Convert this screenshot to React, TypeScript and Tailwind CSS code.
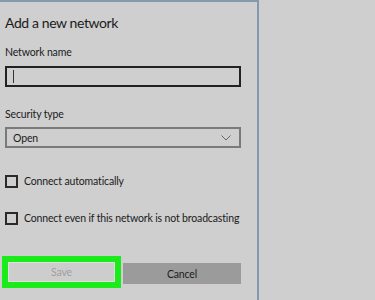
export default function App() {
  return (
    <div className="flex h-[300px] w-[375px] overflow-hidden bg-[#cfcfcf] text-[#1b1b1b] [font-family:Lato,sans-serif]">
      <div className="flex w-[259px] shrink-0 flex-col border-r-2 border-t-2 border-[#8499b0] pl-[5px] pr-[16px] text-[10.5px] leading-[14px] tracking-[-0.15px]">
        <h1 className="mt-[12px] text-[14px] leading-[17px] font-normal tracking-[-0.4px]">Add a new network</h1>

        <label className="mt-[14px]">Network name</label>
        <div className="mt-[7px] flex h-[21px] items-center border-2 border-[#222] pl-[6px]">
          <div className="h-[13px] w-px bg-[#333]" />
        </div>

        <label className="mt-[20px]">Security type</label>
        <div className="mt-[6px] flex h-[21px] items-center justify-between border-2 border-[#7a7a7a] pl-[6px] pr-[8px]">
          <span>Open</span>
          <svg width="10" height="6" viewBox="0 0 10 6" fill="none" stroke="#666" strokeWidth="1">
            <path d="M0.5 0.5L5 5L9.5 0.5" />
          </svg>
        </div>

        <div className="mt-[26px] flex h-[14px] items-center gap-[6px]">
          <div className="h-[13px] w-[13px] shrink-0 border-2 border-[#2a2a2a]" />
          <span>Connect automatically</span>
        </div>

        <div className="mt-[23px] flex h-[14px] items-center gap-[6px]">
          <div className="h-[13px] w-[13px] shrink-0 border-2 border-[#2a2a2a]" />
          <span className="whitespace-nowrap">Connect even if this network is not broadcasting</span>
        </div>

        <div className="mt-[31px] -ml-[3px] flex items-start">
          <div className="border-[6px] border-[#1bea1b]">
            <div className="flex h-[20px] w-[107px] items-center justify-center border border-[#dedede] bg-[#cdcdcd] text-[#a0a0a0]">
              Save
            </div>
          </div>
          <div className="ml-[2px] mt-[7px] flex h-[21px] w-[118px] items-center justify-center bg-[#9b9b9b]">
            Cancel
          </div>
        </div>
      </div>
      <div className="flex-1" />
    </div>
  )
}
